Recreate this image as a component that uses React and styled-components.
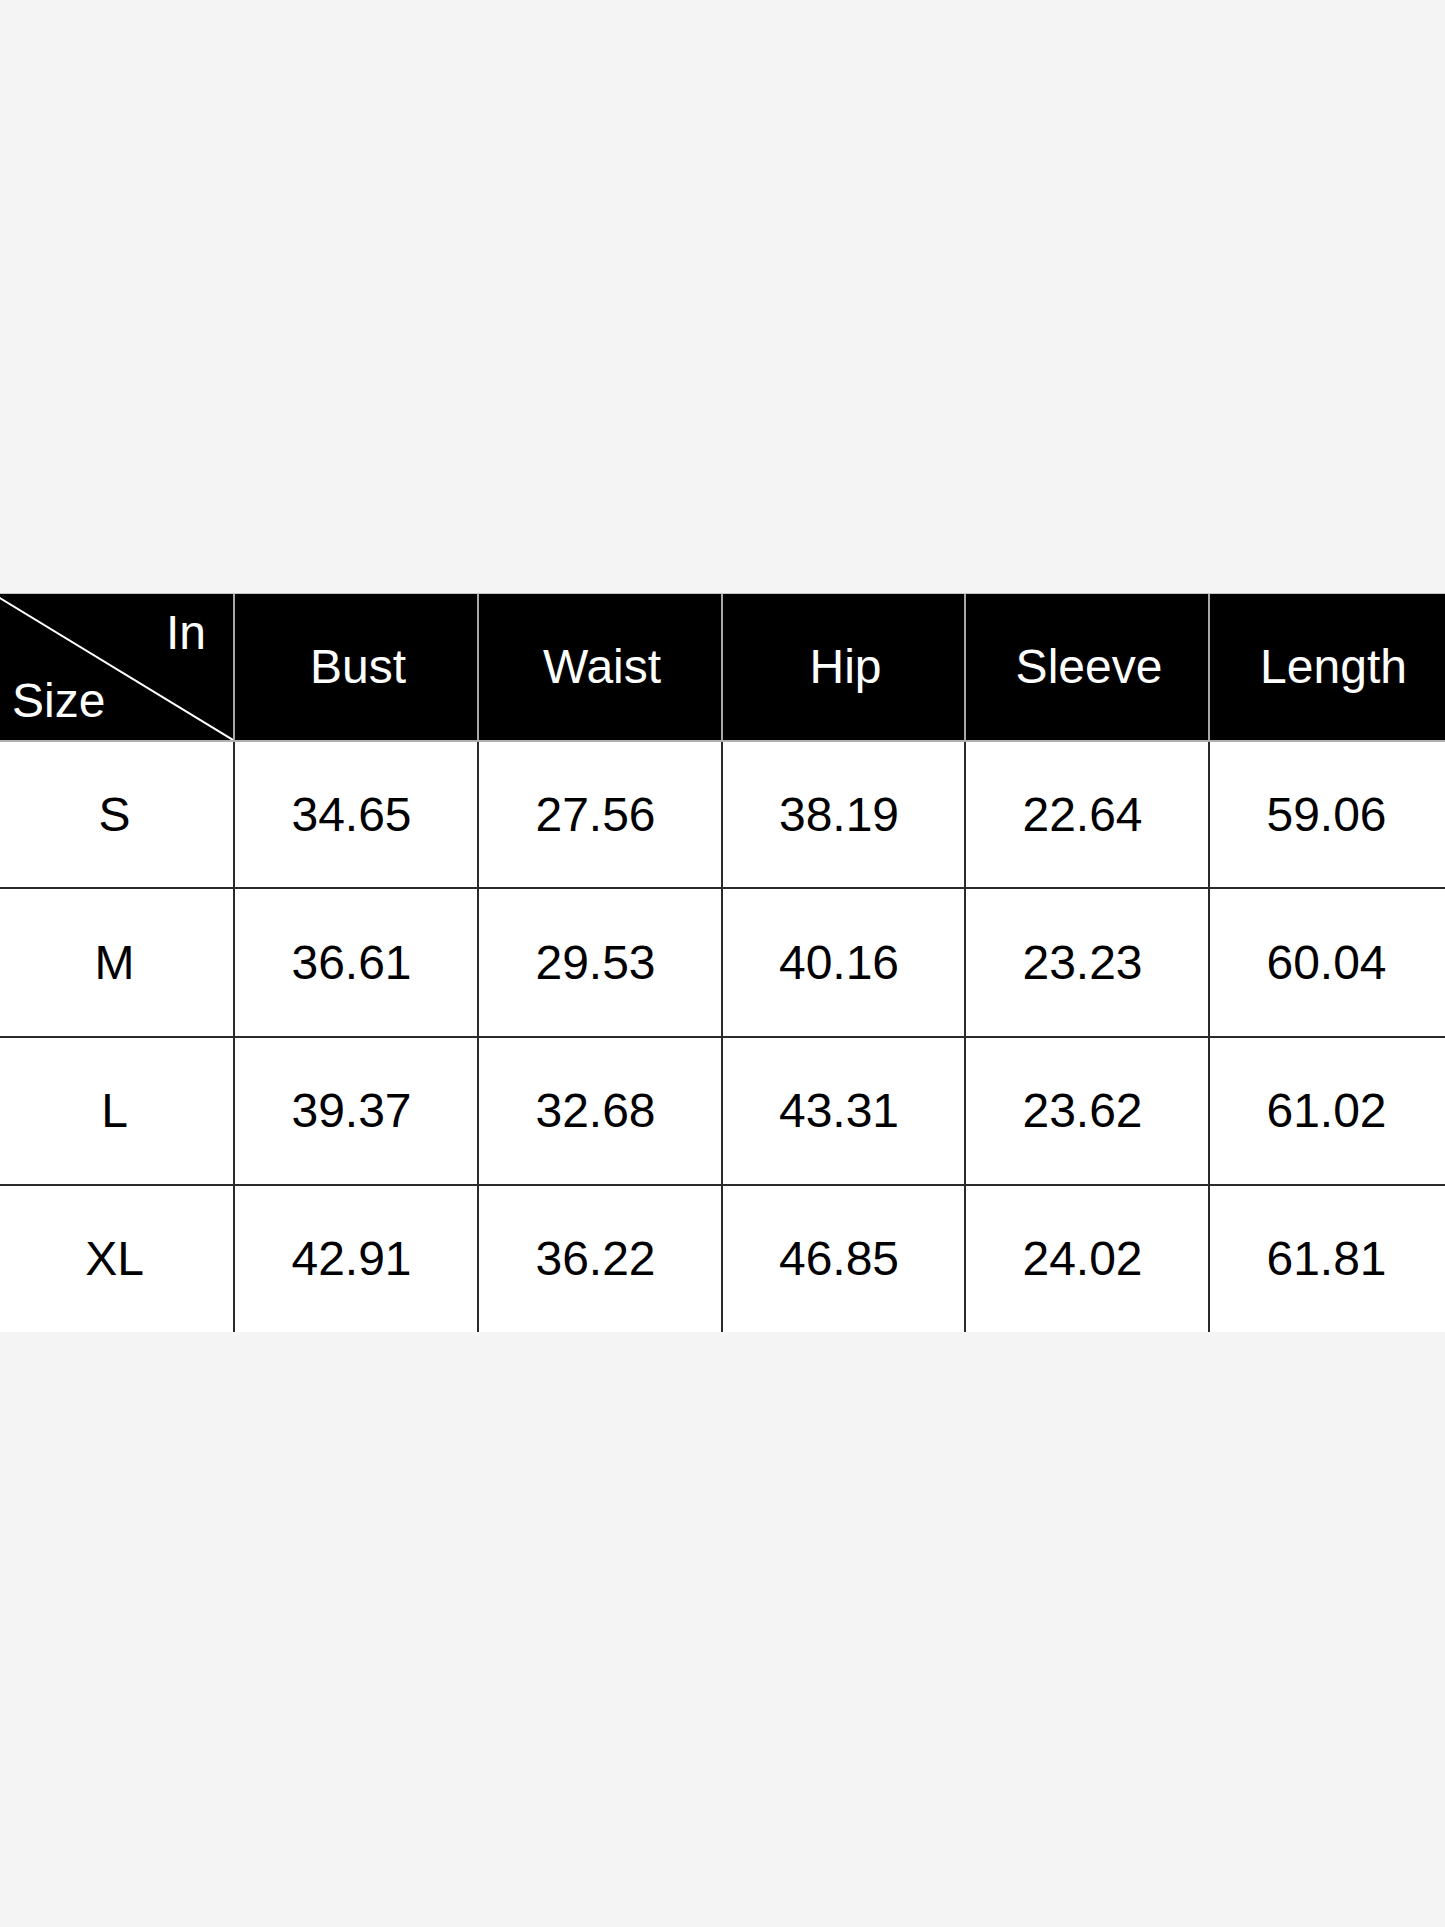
import React from "react";
import styled, { createGlobalStyle } from "styled-components";

const Global = createGlobalStyle`
  html, body { margin: 0; padding: 0; background: #f4f4f4; }
  body { font-family: "Liberation Sans", Arial, sans-serif; }
`;

const Page = styled.div`
  width: 1445px;
  height: 1927px;
  background: #f4f4f4;
  padding-top: 593px;
  box-sizing: border-box;
`;

const Table = styled.div`
  display: grid;
  grid-template-columns: 235px 244px 244px 243px 244px 1fr;
  grid-template-rows: 148px 147px 149px 148px 146px;
  border-top: 1px solid #c4c4c4;
  background: #fff;
`;

const Cell = styled.div`
  box-sizing: border-box;
  display: flex;
  align-items: center;
  justify-content: center;
  font-size: 48px;
  line-height: 1.15;
  background: ${(p) => (p.$head ? "#000" : "#fff")};
  color: ${(p) => (p.$head ? "#fff" : "#000")};
  border-right: ${(p) => (p.$last ? "none" : p.$head ? "2px solid #a8a8a8" : "2px solid #2a2a2a")};
  border-bottom: ${(p) => (p.$bottom ? "none" : p.$head ? "2px solid #b0b0b0" : "2px solid #2a2a2a")};
  padding-right: ${(p) => p.$right || 0}px;
  padding-left: ${(p) => p.$left || 0}px;
`;

const Corner = styled(Cell)`
  position: relative;
  flex-direction: column;
  align-items: stretch;
  justify-content: space-between;
  padding: 11px 27px 12px 12px;
  overflow: hidden;
`;

const CornerTop = styled.span`
  align-self: flex-end;
`;

const CornerBottom = styled.span`
  align-self: flex-start;
`;

const Diagonal = styled.svg`
  position: absolute;
  inset: 0;
  width: 100%;
  height: 100%;
  pointer-events: none;
`;

const heads = ["Bust", "Waist", "Hip", "Sleeve", "Length"];
const rows = [
  ["S", "34.65", "27.56", "38.19", "22.64", "59.06"],
  ["M", "36.61", "29.53", "40.16", "23.23", "60.04"],
  ["L", "39.37", "32.68", "43.31", "23.62", "61.02"],
  ["XL", "42.91", "36.22", "46.85", "24.02", "61.81"],
];

export default function App() {
  return (
    <Page>
      <Global />
      <Table>
        <Corner $head>
          <Diagonal viewBox="0 0 235 148" preserveAspectRatio="none">
            <line x1="-2" y1="3" x2="235" y2="148" stroke="#fff" strokeWidth="2" />
          </Diagonal>
          <CornerTop>In</CornerTop>
          <CornerBottom>Size</CornerBottom>
        </Corner>
        {heads.map((h, i) => (
          <Cell
            key={h}
            $head
            $last={i === heads.length - 1}
            $left={i === heads.length - 1 ? 12 : 4}
          >
            {h}
          </Cell>
        ))}
        {rows.map((r, ri) =>
          r.map((v, ci) => (
            <Cell
              key={ri + "-" + ci}
              $last={ci === r.length - 1}
              $bottom={ri === rows.length - 1}
              $right={ci === 0 ? 4 : ci === r.length - 1 ? 2 : 9}
            >
              {v}
            </Cell>
          ))
        )}
      </Table>
    </Page>
  );
}
